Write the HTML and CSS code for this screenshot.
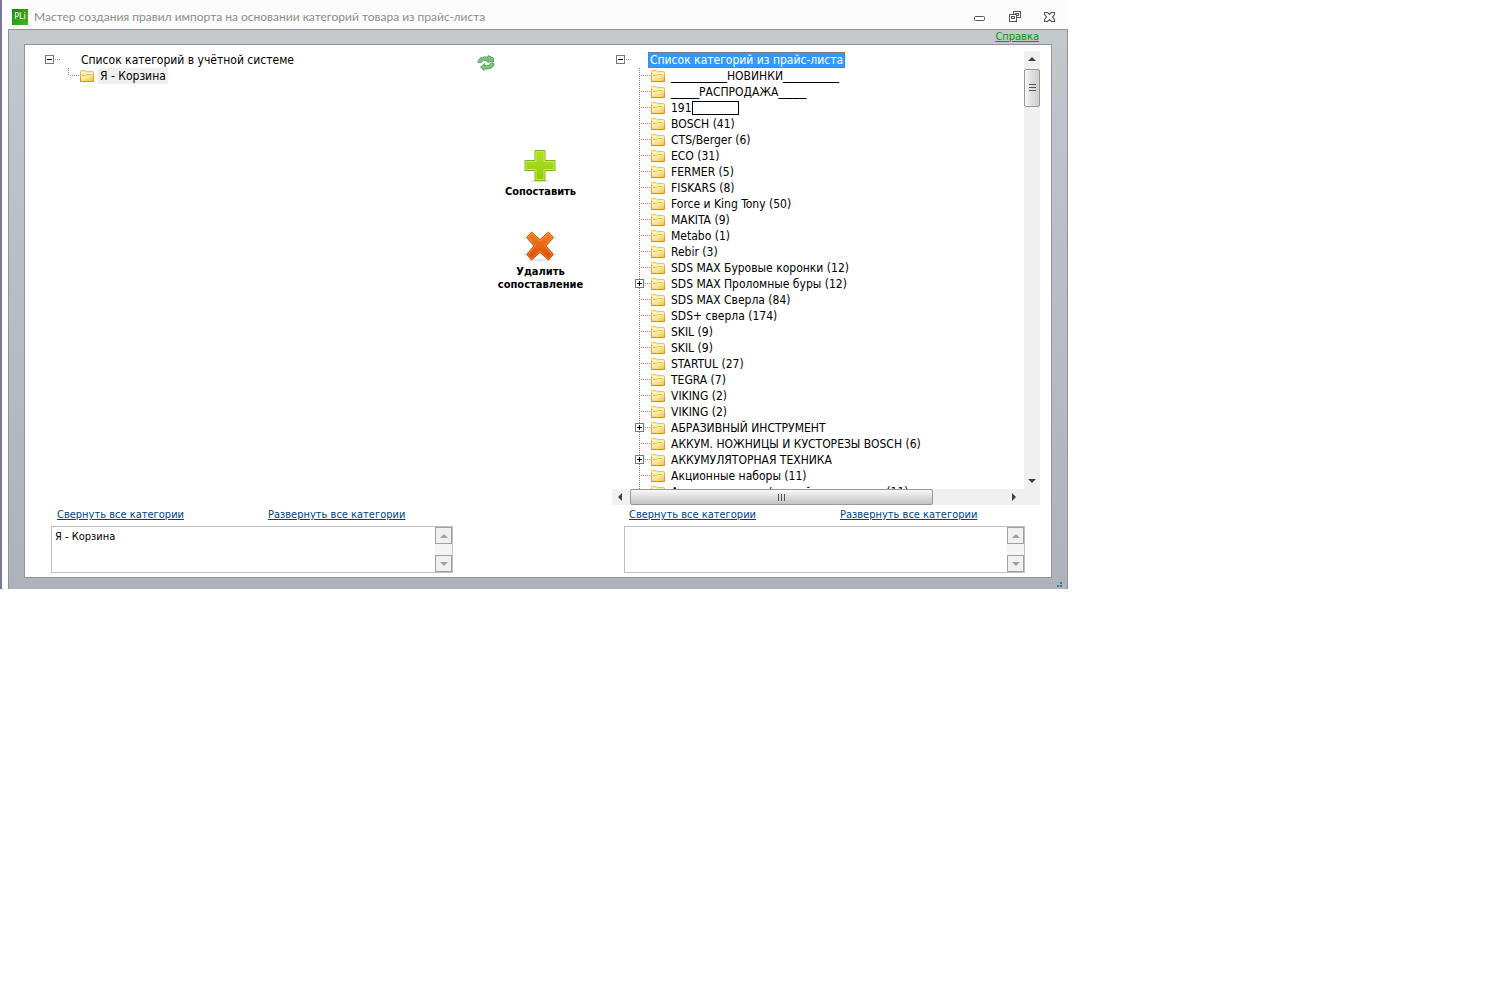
FILE: index.html
```html
<!DOCTYPE html>
<html lang="ru">
<head>
  <meta charset="UTF-8">
  <meta name="viewport" content="width=device-width, initial-scale=1.0">
  <title>Мастер создания правил импорта</title>
  <link rel="stylesheet" href="styles.css">
</head>
<body>

  <svg width="0" height="0" class="defs">
    <defs>
      <linearGradient id="folderFill" x1="0" y1="0" x2="1" y2="1">
        <stop offset="0" stop-color="#fffbe0"/>
        <stop offset="0.5" stop-color="#fbe48c"/>
        <stop offset="1" stop-color="#f3c51c"/>
      </linearGradient>
      <linearGradient id="folderEdge" x1="0" y1="0" x2="0" y2="1">
        <stop offset="0" stop-color="#e9c765"/>
        <stop offset="1" stop-color="#d98a33"/>
      </linearGradient>
      <symbol id="folder" viewBox="0 0 14 12">
        <path d="M.5 11.5V1.5q0-1 1-1h4l1 1h6q1 0 1 1v9z" fill="#fbe9a6" stroke="url(#folderEdge)"/>
        <path d="M2 2.500h3M7 3.500h5" stroke="#fff"/>
        <path d="M1 11V6.500h4l1-1.500h7v6z" fill="url(#folderFill)"/>
        <path d="M2 5.500h3.500l1-1H12" fill="none" stroke="#e7bd54"/>
      </symbol>
    </defs>
  </svg>

  <div class="window">
    <header class="titlebar">
      <span class="logo">PLi</span>
      <h1>Мастер создания правил импорта на основании категорий товара из прайс-листа</h1>
      <div class="window-buttons">
        <button type="button" aria-label="Свернуть">
          <svg width="12" height="12" viewBox="0 0 12 12"><rect x="0.5" y="5.5" width="10" height="4" rx="1" fill="#fff" stroke="#535666"/></svg>
        </button>
        <button type="button" aria-label="Восстановить">
          <svg width="12" height="12" viewBox="0 0 12 12" fill="#fff" stroke="#535666"><rect x="4.500" y="0.500" width="7" height="6"/><rect x="6.500" y="2.500" width="3" height="2"/><rect x="0.500" y="3.500" width="7" height="7"/><rect x="2.500" y="5.500" width="3" height="2"/></svg>
        </button>
        <button type="button" aria-label="Закрыть">
          <svg width="12" height="12" viewBox="0 0 12 12"><path d="M.5 1.500h3L5.500 3.500l2-2h3v2L8.500 6l2 2.500v2h-3l-2-2-2 2h-3v-2L2.500 6 .5 3.500z" fill="#fff" stroke="#535666" stroke-width="1.200"/></svg>
        </button>
      </div>
    </header>

    <main class="frame">
      <nav class="help"><a href="#">Справка</a></nav>

      <div class="panel">
        <section class="pane">
          <div class="tree">
            <div class="root">
              <button type="button" class="toggle" aria-label="Свернуть"></button>
              <span class="branch"></span>
              <span class="label">Список категорий в учётной системе</span>
            </div>
            <ul class="items short">
              <li><span class="branch"></span><svg class="folder"><use href="#folder"/></svg><span class="label current">Я - Корзина</span></li>
            </ul>
          </div>
          <div class="links">
            <a href="#">Свернуть все категории</a>
            <a href="#">Развернуть все категории</a>
          </div>
          <div class="memo">
            <textarea aria-label="Выбранная категория учётной системы">Я - Корзина</textarea>
            <div class="memo-scroll">
              <button type="button" class="arrow up" aria-label="Вверх"></button>
              <button type="button" class="arrow down" aria-label="Вниз"></button>
            </div>
          </div>
        </section>

        <section class="actions">
          <button type="button" class="refresh" aria-label="Обновить">
            <svg width="18" height="16" viewBox="0 0 18 16" stroke="#4a9a52" stroke-width="0.8" fill="#7cc180">
              <path d="M1 7.500C1 3 5 1.500 11 2V.5l5.500 2.500V7H10V5.500C7 5 5 6 4.500 7.500z"/>
              <path d="M17 8.500c0 4.500-4 6-10 5.500v1.500L3.500 12 7.500 8.500V10.500c4 .5 5.500-.5 6-2z"/>
            </svg>
          </button>
          <button type="button" class="action">
            <svg width="34" height="34" viewBox="0 0 34 34">
              <defs>
                <linearGradient id="plusFill" x1="0" y1="0" x2="0" y2="1">
                  <stop offset="0" stop-color="#b4e02a"/>
                  <stop offset="1" stop-color="#8fcc06"/>
                </linearGradient>
              </defs>
              <ellipse cx="17" cy="32" rx="9" ry="1.500" fill="#ddd"/>
              <path d="M12 1.500h10v10h10v10h-10v10h-10v-10h-10v-10h10z" fill="url(#plusFill)" stroke="#7cb518"/>
              <path d="M13 2.500h8v10h10v8h-10v10h-8v-10h-10v-8h10z" fill="none" stroke="#c6ea5c"/>
            </svg>
            Сопоставить
          </button>
          <button type="button" class="action">
            <svg width="34" height="34" viewBox="0 0 34 34">
              <defs>
                <linearGradient id="crossFill" x1="0" y1="0" x2="0" y2="1">
                  <stop offset="0" stop-color="#f58220"/>
                  <stop offset="1" stop-color="#d84c04"/>
                </linearGradient>
              </defs>
              <ellipse cx="17" cy="31" rx="13" ry="1.500" fill="#e4e4e4"/>
              <path d="M8.500 3L17 10.500 25.500 3 30.500 8.500 23 17l7.500 8.500-5 5.500L17 23.500 8.500 31l-5-5.500L11 17 3.500 8.500z" fill="url(#crossFill)" stroke="#cc5410" stroke-linejoin="round"/>
              <path d="M8.500 4.500L17 12l8.500-7.500L29 8.500 21.500 17l7.500 8.500-3.500 4L17 22l-8.500 7.500-3.500-4L12.500 17 5 8.500z" fill="none" stroke="#f39a56" stroke-opacity="0.6"/>
            </svg>
            Удалить<br>сопоставление
          </button>
        </section>

        <section class="pane">
          <div class="scroller">
            <div class="tree">
              <div class="root">
                <button type="button" class="toggle" aria-label="Свернуть"></button>
                <span class="branch"></span>
                <span class="label selected">Список категорий из прайс-листа</span>
              </div>
              <ul class="items" id="priceItems"></ul>
            </div>
            <div class="scrollbar vertical">
              <button type="button" class="arrow up" aria-label="Вверх"></button>
              <span class="thumb"></span>
              <button type="button" class="arrow down" aria-label="Вниз"></button>
            </div>
            <div class="scrollbar horizontal">
              <button type="button" class="arrow left" aria-label="Влево"></button>
              <span class="thumb"></span>
              <button type="button" class="arrow right" aria-label="Вправо"></button>
            </div>
          </div>
          <div class="links indent">
            <a href="#">Свернуть все категории</a>
            <a href="#">Развернуть все категории</a>
          </div>
          <div class="memo indent">
            <textarea aria-label="Выбранная категория прайс-листа"></textarea>
            <div class="memo-scroll">
              <button type="button" class="arrow up" aria-label="Вверх"></button>
              <button type="button" class="arrow down" aria-label="Вниз"></button>
            </div>
          </div>
        </section>
      </div>

      <svg class="grip" width="6" height="6" viewBox="0 0 6 6"><path d="M4 0h2v2h-2zM4 3h2v2h-2zM1 3h2v2h-2z" fill="#3f6fae"/></svg>
    </main>
  </div>

  <script src="script.js"></script>
</body>
</html>
```
FILE: styles.css
```css
body {
  margin: 0;
  background: #fff;
  font-family: "DejaVu Sans Condensed", Tahoma, sans-serif;
  font-size: 12px;
  color: #000;
}

button {
  padding: 0;
  border: none;
  background: none;
  font: inherit;
  color: inherit;
  cursor: pointer;
}

a {
  color: #003f87;
}

.defs {
  position: absolute;
}

.window {
  box-sizing: border-box;
  max-width: 1068px;
  padding-left: 6px;
  border-left: 2px solid #77779a;
  background: #fcfcfc;
}

/* title bar */
.titlebar {
  display: flex;
  align-items: center;
  height: 25px;
  padding: 4px 12px 0 4px;
}

.titlebar h1 {
  flex: 1;
  margin: 0 0 0 6px;
  font-family: Lato, "Segoe UI", sans-serif;
  font-size: 12px;
  font-weight: normal;
  color: #8c8c8c;
}

.logo {
  width: 16px;
  height: 16px;
  background: linear-gradient(135deg, #128a12, #4cb81c);
  font-size: 9px;
  line-height: 15px;
  text-align: center;
  color: #fff;
}

.window-buttons {
  display: flex;
  gap: 23px;
}

.window-buttons svg {
  display: block;
}

/* grey frame */
.frame {
  padding: 0 15px 4px;
  border: 1px solid #8f9499;
  border-bottom: none;
  background: linear-gradient(#c4c9cc, #bfc3cc 15%, #adb2bb);
}

.help {
  height: 14px;
  padding-right: 13px;
  font-size: 11px;
  line-height: 13px;
  text-align: right;
}

.help a {
  color: #009a00;
}

.panel {
  display: grid;
  grid-template-columns: 408fr 159px 428fr;
  padding: 6px 11px 4px 20px;
  border: 1px solid #8f9499;
  background: #fff;
}

.grip {
  display: block;
  margin: 4px -10px -3px auto;
}

.pane {
  display: flex;
  flex-direction: column;
  min-width: 0;
}

/* category trees */
.tree {
  flex: 1;
  min-width: 0;
  overflow: hidden;
  white-space: nowrap;
  line-height: 16px;
}

.root,
.items li {
  display: flex;
  align-items: center;
  height: 16px;
}

.root {
  padding-top: 1px;
}

.root .label {
  margin-left: 18px;
}

.scroller .root {
  padding-left: 4px;
}

.items {
  margin: 0;
  padding: 0 0 0 28px;
  list-style: none;
  background: repeating-linear-gradient(#888 0 1px, transparent 1px 2px) 27px 0 / 1px 100% no-repeat;
}

.items.short {
  padding-left: 24px;
  background-position: 23px 0;
  background-size: 1px 8px;
}

.items .toggle {
  margin-left: -5px;
}

.toggle {
  box-sizing: border-box;
  width: 9px;
  height: 9px;
  margin-bottom: 2px;
  border: 1px solid #777;
  background: linear-gradient(#000, #000) center / 5px 1px no-repeat #fff;
}

.toggle.plus {
  background: linear-gradient(#000, #000) center / 5px 1px no-repeat,
    linear-gradient(#000, #000) center / 1px 5px no-repeat #fff;
}

.branch {
  width: 11px;
  height: 1px;
  margin-bottom: 2px;
  background: repeating-linear-gradient(90deg, transparent 0 1px, #888 1px 2px);
}

.toggle + .branch {
  width: 7px;
}

.folder {
  width: 14px;
  height: 12px;
  margin-right: 4px;
}

.label {
  padding: 0 2px;
}

.current {
  background: #efefef;
}

.root .selected {
  box-sizing: border-box;
  height: 16px;
  margin-left: 18px;
  padding: 0 1px;
  border: 1px dotted #c06000;
  background: #3399ff;
  line-height: 14px;
  color: #fff;
}

.scroller .root .branch {
  margin-right: -2px;
}

.dash {
  font-family: "DejaVu Sans", Verdana, sans-serif;
  font-size: 14px;
  line-height: 14px;
}

.hidden-name {
  box-sizing: border-box;
  width: 47px;
  height: 14px;
  margin-left: -2px;
  border: 1px solid #000;
}

/* scroll area */
.scroller {
  display: grid;
  grid-template-columns: 1fr 16px;
  grid-template-rows: 438px 16px;
  background: #f0f0f0;
}

.scroller .tree {
  background: #fff;
}

.scrollbar {
  display: flex;
  background: #f0f0f0;
}

.scrollbar .arrow {
  flex: none;
  width: 16px;
  height: 16px;
}

.scrollbar .thumb {
  box-sizing: border-box;
  border: 1px solid #979797;
  border-radius: 2px;
}

.vertical {
  flex-direction: column;
}

.vertical .thumb {
  height: 38px;
  margin: 2px 0 auto;
  background: repeating-linear-gradient(#555 0 1px, transparent 1px 3px) center / 7px 8px no-repeat,
    linear-gradient(90deg, #f8f8f8, #ddd 50%, #cfcfcf);
}

.horizontal {
  padding-right: 2px;
}

.horizontal .thumb {
  width: 74%;
  margin: 0 auto 0 2px;
  background: repeating-linear-gradient(90deg, #555 0 1px, transparent 1px 3px) center / 8px 7px no-repeat,
    linear-gradient(#f8f8f8, #ddd 50%, #c4c4c8);
}

.arrow {
  display: flex;
  align-items: center;
  justify-content: center;
}

.arrow::before {
  content: "";
  border: 4px solid transparent;
}

.arrow.up::before {
  border-top: none;
  border-bottom-color: #404040;
}

.arrow.down::before {
  border-bottom: none;
  border-top-color: #404040;
}

.arrow.left::before {
  border-left: none;
  border-right-color: #404040;
}

.arrow.right::before {
  border-right: none;
  border-left-color: #404040;
}

/* links and text boxes under the trees */
.links {
  display: flex;
  gap: 84px;
  height: 21px;
  padding-left: 12px;
  font-size: 11px;
  line-height: 20px;
  white-space: nowrap;
}

.links.indent {
  padding-left: 17px;
}

.memo {
  box-sizing: border-box;
  display: flex;
  height: 47px;
  margin-left: 6px;
  border: 1px solid #c0c0c0;
}

.memo.indent {
  margin: 0 15px 0 12px;
}

.memo textarea {
  flex: 1;
  min-width: 0;
  padding: 3px;
  border: none;
  resize: none;
  outline: none;
  overflow: hidden;
  background: #fff;
  font-family: inherit;
  font-size: 11px;
  line-height: 14px;
}

.memo-scroll {
  display: flex;
  flex-direction: column;
  justify-content: space-between;
  background: #f4f4f4;
}

.memo-scroll .arrow {
  box-sizing: border-box;
  width: 17px;
  height: 17px;
  border: 1px solid #a0a0a0;
  background: #f0f0f0;
}

.memo-scroll .up::before {
  border-bottom-color: #a0a0a0;
}

.memo-scroll .down::before {
  border-top-color: #a0a0a0;
}

/* middle buttons */
.actions {
  display: flex;
  flex-direction: column;
  align-items: center;
  padding-left: 16px;
}

.refresh {
  align-self: flex-start;
  height: 16px;
  margin: 4px 0 78px 8px;
}

.refresh svg {
  display: block;
}

.action {
  margin-bottom: 31px;
  font-size: 11px;
  font-weight: bold;
  line-height: 13px;
}

.action svg {
  display: block;
  margin: 0 auto 2px;
}
```
FILE: script.js
```js
var categories = [
  "________НОВИНКИ________",
  "____РАСПРОДАЖА____",
  "191",
  "BOSCH (41)",
  "CTS/Berger (6)",
  "ECO (31)",
  "FERMER (5)",
  "FISKARS (8)",
  "Force и King Tony (50)",
  "MAKITA (9)",
  "Metabo (1)",
  "Rebir (3)",
  "SDS MAX Буровые коронки (12)",
  "+SDS MAX Проломные буры (12)",
  "SDS MAX Сверла (84)",
  "SDS+ сверла (174)",
  "SKIL (9)",
  "SKIL (9)",
  "STARTUL (27)",
  "TEGRA (7)",
  "VIKING (2)",
  "VIKING (2)",
  "+АБРАЗИВНЫЙ ИНСТРУМЕНТ",
  "АККУМ. НОЖНИЦЫ И КУСТОРЕЗЫ BOSCH (6)",
  "+АККУМУЛЯТОРНАЯ ТЕХНИКА",
  "Акционные наборы (11)",
  "Алмазные чашки/ручной инструмент (11)"
];

// A leading plus marks a category that has children
var html = "";
for (var i = 0; i < categories.length; i++) {
  var name = categories[i];
  var hasChildren = name.charAt(0) === "+";
  if (hasChildren) {
    name = name.substring(1);
  }
  html += "<li>";
  if (hasChildren) {
    html += '<button type="button" class="toggle plus" aria-label="Развернуть"></button>';
  }
  html += '<span class="branch"></span><svg class="folder"><use href="#folder"/></svg>';
  html += '<span class="label">' + name.replace(/_+/g, '<span class="dash">$&</span>') + "</span>";
  if (name === "191") {
    html += '<span class="hidden-name"></span>';
  }
  html += "</li>";
}
document.getElementById("priceItems").innerHTML = html;
```
